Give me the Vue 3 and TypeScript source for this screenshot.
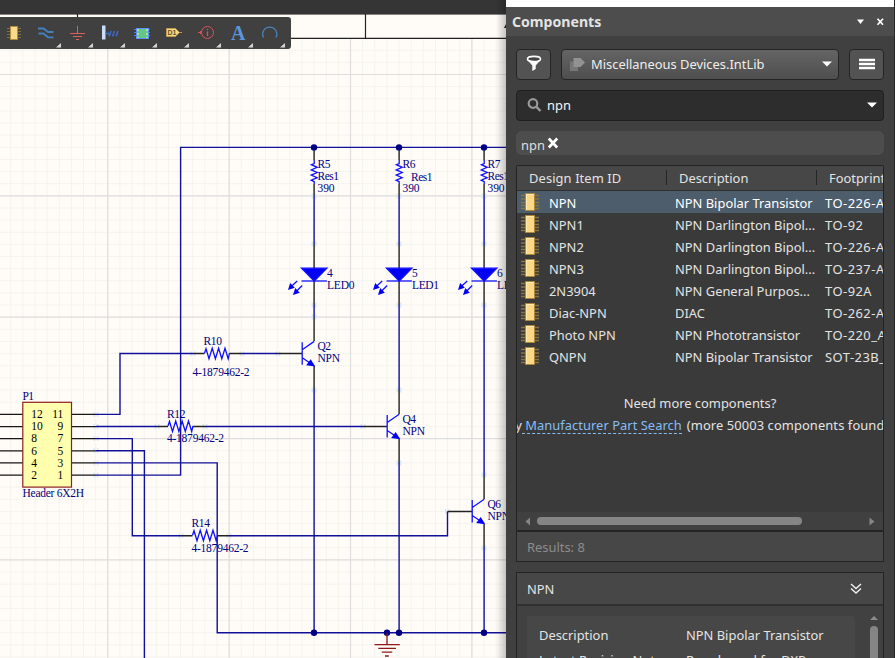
<script setup lang="ts">
interface Part { id: string; desc: string; foot: string }
interface Label { x: number; y: number; t: string; w: number }

const parts: Part[] = [
  { id: 'NPN', desc: 'NPN Bipolar Transistor', foot: 'TO-226-AA' },
  { id: 'NPN1', desc: 'NPN Darlington Bipol...', foot: 'TO-92' },
  { id: 'NPN2', desc: 'NPN Darlington Bipol...', foot: 'TO-226-AA' },
  { id: 'NPN3', desc: 'NPN Darlington Bipol...', foot: 'TO-237-AA' },
  { id: '2N3904', desc: 'NPN General Purpos...', foot: 'TO-92A' },
  { id: 'Diac-NPN', desc: 'DIAC', foot: 'TO-262-AA' },
  { id: 'Photo NPN', desc: 'NPN Phototransistor', foot: 'TO-220_A' },
  { id: 'QNPN', desc: 'NPN Bipolar Transistor', foot: 'SOT-23B_N' },
]

const labels: Label[] = [
  { x: 317.5, y: 168, t: 'R5', w: 13 }, { x: 317.5, y: 180, t: 'Res1', w: 21.5 }, { x: 317.5, y: 192, t: '390', w: 17 },
  { x: 402.5, y: 168, t: 'R6', w: 13 }, { x: 411, y: 181, t: 'Res1', w: 21.5 }, { x: 402.5, y: 192, t: '390', w: 17 },
  { x: 487.5, y: 168, t: 'R7', w: 13 }, { x: 487.5, y: 180, t: 'Res1', w: 21.5 }, { x: 487.5, y: 192, t: '390', w: 17 },
  { x: 327, y: 277, t: '4', w: 5.5 }, { x: 327, y: 289, t: 'LED0', w: 27.5 },
  { x: 412, y: 277, t: '5', w: 5.5 }, { x: 412, y: 289, t: 'LED1', w: 27 },
  { x: 497, y: 277, t: '6', w: 5.5 }, { x: 497, y: 289, t: 'LED2', w: 27.5 },
  { x: 317.5, y: 350, t: 'Q2', w: 13.5 }, { x: 317.5, y: 362, t: 'NPN', w: 22.5 },
  { x: 402.5, y: 423, t: 'Q4', w: 13.5 }, { x: 402.5, y: 435, t: 'NPN', w: 22.5 },
  { x: 487.5, y: 508, t: 'Q6', w: 13.5 }, { x: 487.5, y: 520, t: 'NPN', w: 22.5 },
  { x: 203.5, y: 345, t: 'R10', w: 18.5 }, { x: 192.5, y: 376, t: '4-1879462-2', w: 57 },
  { x: 167, y: 418, t: 'R12', w: 18.5 }, { x: 167, y: 442, t: '4-1879462-2', w: 57 },
  { x: 191.5, y: 527, t: 'R14', w: 18.5 }, { x: 191.5, y: 552, t: '4-1879462-2', w: 57 },
  { x: 22.5, y: 400, t: 'P1', w: 11.5 }, { x: 22.5, y: 497, t: 'Header 6X2H', w: 61.5 },
]

const pinRows = [0, 1, 2, 3, 4, 5].map(i => ({ y: 414.4 + i * 12.14, l: 12 - i * 2, r: 11 - i * 2 }))
const columns = [314.2, 399.2, 484.2]
const transistors = [{ x: 314.2, y: 353.7 }, { x: 399.2, y: 426.5 }, { x: 484.2, y: 511.5 }]
const resistors = [{ x: 204.5, y: 353.2 }, { x: 168, y: 426 }, { x: 192.5, y: 535.2 }]
const wires = [
  'M96 414.4H120V353.5H193', 'M242 353.5H278', 'M96 426.5H157', 'M205 426.5H363',
  'M96 438.6H132.3V535.7H181', 'M229 535.7H447.5V511.5', 'M96 450.8H144.4V658',
  'M96 462.9H217.2V632.7H506', 'M96 475.1H180.6V147.4H506',
  'M314.1 196V244M314.1 305V317M314.1 390V632.7', 'M399.1 196V244M399.1 305V390M399.1 463V632.7',
  'M484.1 196V244M484.1 305V475M484.1 548V632.7',
]
const pins = [
  'M193 353.5H204.5M229.5 353.5H242M278 353.5H302', 'M157 426.5H168M193 426.5H205M363 426.5H387',
  'M181 535.7H192.5M217.5 535.7H229M447.5 511.5H472',
  'M314.1 147.4V160M314.1 184V196M314.1 244V305M314.1 317V341M314.1 366V390',
  'M399.1 147.4V160M399.1 184V196M399.1 244V305M399.1 390V414M399.1 439V463',
  'M484.1 147.4V160M484.1 184V196M484.1 244V305M484.1 475V499M484.1 524V548',
]
const nodes = [[314, 147.4], [399, 147.4], [484, 147.4], [314, 632.7], [387, 632.7], [399, 632.7], [484, 632.7]]
const marks = [
  [193, 353.7], [242, 353.7], [278, 353.7], [96, 414.4], [96, 426.5], [96, 438.6], [96, 450.8], [96, 462.9], [96, 475.1],
  [157, 426.5], [205, 426.5], [363, 426.5], [181, 535.7], [229, 535.7], [447.5, 511.5],
  [314, 196], [314, 244], [314, 305], [314, 317], [314, 390], [399, 196], [399, 244], [399, 305], [399, 390], [399, 463],
  [484, 196], [484, 244], [484, 305], [484, 475], [484, 548],
]
const minorX = Array.from({ length: 42 }, (_, i) => 10.7 + i * 12.135)
const minorY = Array.from({ length: 52 }, (_, i) => 38.1 + i * 12.135)
const majorX = [107.8, 229.2, 350.5, 471.9]
const majorY = [74.5, 195.9, 317.2, 438.6, 559.9]
const tools = ['part', 'wire', 'gnd', 'bus', 'sheet', 'port', 'info', 'text', 'arc']
</script>

<template>
  <div class="screen">
    <main class="editor">
      <div class="strip"></div>
      <svg class="sheet" width="506" height="644" viewBox="0 14 506 644">
        <rect x="0" y="14" width="506" height="644" fill="#fffcf7" />
        <g fill="none" stroke="#f4f3ee" stroke-width="1">
          <path v-for="x in minorX" :key="'x' + x" :d="`M${x} 39V658`" />
          <path v-for="y in minorY" :key="'y' + y" :d="`M0 ${y}H506`" />
        </g>
        <g fill="none" stroke="#dedede" stroke-width="1.2">
          <path v-for="x in majorX" :key="'X' + x" :d="`M${x} 39V658`" />
          <path v-for="y in majorY" :key="'Y' + y" :d="`M0 ${y}H506`" />
        </g>
        <path d="M0 14.5H506" stroke="#858482" />
        <path d="M0 38.4H506M77.5 14V38M365.5 14V38" fill="none" stroke="#222" stroke-width="1.2" />
        <path d="M504 28l2-4v4z" fill="#222" />
        <g fill="#dce7f6">
          <path v-for="(m, i) in marks" :key="i" :d="`M${m[0] - 2.5} ${m[1] - 2.5}h1.5v1.5h2v-1.5h1.5v5h-1.5v-1.5h-2v1.5h-1.5z`" />
        </g>
        <g fill="none" stroke="#222" stroke-width="1.4"><path v-for="p in pins" :key="p" :d="p" /></g>
        <g fill="none" stroke="#10109a" stroke-width="1.4"><path v-for="w in wires" :key="w" :d="w" /></g>
        <circle v-for="(n, i) in nodes" :key="'n' + i" :cx="n[0]" :cy="n[1]" r="3.2" fill="#000084" />

        <g fill="none" stroke="#1010ff" stroke-width="1.3">
          <path v-for="r in resistors" :key="r.x" :d="`M${r.x} ${r.y}l1.5-4.5 3 10 3.2-10.5 3.2 10.5 3.2-10.5 3.2 10.5 3.2-10.5 3.2 10.5 1.3-5.5`" />
          <g v-for="x in columns" :key="'c' + x">
            <path :d="`M${x} 160V163.5l-2.8 1.2 5.8 2.6-6 2.6 6 2.6-6 2.6 6 2.6-6 2.5 3 1.5V184`" />
            <path :d="`M${x - 12.7} 281H${x + 12.7}`" />
            <path :d="`M${x - 12.7} 268.2H${x + 12.7}L${x} 281z`" fill="#0000f5" />
            <path :d="`M${x - 17} 281L${x - 24} 287.5M${x - 12} 285.5L${x - 19} 292.5`" />
            <path :d="`M${x - 26.2} 290l2.2-7 4.6 4.8zM${x - 21.2} 295l2.2-7 4.6 4.8z`" fill="#0000f5" stroke="none" />
          </g>
          <g v-for="t in transistors" :key="'t' + t.y">
            <path :d="`M${t.x - 12} ${t.y - 11.5}V${t.y + 11}M${t.x - 12} ${t.y - 4}L${t.x} ${t.y - 12.3}M${t.x - 12} ${t.y + 4}L${t.x} ${t.y + 12}`" />
            <path :d="`M${t.x + 1} ${t.y + 12.8}l-9-1.3 4.5-6z`" fill="#0000f5" stroke="none" />
          </g>
        </g>

        <path d="M387 633V645M374.5 644.6H399.8M378.3 648.4H396M381.8 652.2H392.3M385 656H388.8" stroke="#901818" stroke-width="1.3" fill="none" />

        <rect x="22.8" y="402.3" width="48.7" height="84.8" fill="#ffffae" stroke="#8f2020" stroke-width="1.2" />
        <g v-for="p in pinRows" :key="p.l">
          <path :d="`M0 ${p.y}H22.5M72 ${p.y}H96`" stroke="#181818" stroke-width="1.25" />
          <text :x="31.3" :y="p.y + 3.7" class="pin">{{ p.l }}</text>
          <text :x="63.3" :y="p.y + 3.7" class="pin right">{{ p.r }}</text>
        </g>
        <text v-for="(l, i) in labels" :key="'l' + i" :x="l.x" :y="l.y" :textLength="l.w" class="label">{{ l.t }}</text>
      </svg>

      <nav class="toolbar">
        <div v-for="t in tools" :key="t" class="tool">
          <svg width="32" height="32" viewBox="0 0 32 32">
            <g v-if="t === 'part'">
              <path d="M7 11.5h3m8 0h3M7 14.5h3m8 0h3M7 17.5h3m8 0h3M7 20.5h3m8 0h3" stroke="#846f37" />
              <rect x="10.5" y="9.5" width="7" height="13" fill="#fad98a" stroke="#b08d3e" />
            </g>
            <g v-else-if="t === 'wire'" fill="none" stroke="#4380bd" stroke-width="1.8">
              <path d="M6 11.5h5.5l4.500 3.500h5.500M6.500 16.500h5l4.500 3.800h5.500" />
            </g>
            <path v-else-if="t === 'gnd'" d="M13.5 9v7M6 16.5h15M9 19.5h9M12 22.5h3" stroke="#dc6058" fill="none" />
            <g v-else-if="t === 'bus'">
              <path d="M6 8.5h3.5v14H6z" fill="#c9ddfb" />
              <path d="M9.5 16.5h3.500M12.500 18.500h1l1.500-4.500M16 18.500h1l1.500-4.500M19.500 18.500h1l1.500-4.500" fill="none" stroke="#3c6fd1" stroke-width="1.4" />
            </g>
            <g v-else-if="t === 'sheet'">
              <path d="M6 12.5h16M6 15.5h16M6 18.5h16" stroke="#4b82dc" />
              <rect x="8.5" y="11.5" width="12" height="10" fill="#61c78c" stroke="#5a93ff" />
              <path d="M10 12v9M19 12v9" stroke="#d8e882" stroke-width="1.5" stroke-dasharray="2 2" />
            </g>
            <g v-else-if="t === 'port'">
              <path d="M6.5 11.5H15.5L19.5 15.5 15.5 19.5H6.5zM19.5 15.5H22" fill="#f5d788" stroke="#bd9c4e" />
              <text x="7.5" y="18.2" class="d1">D1</text>
            </g>
            <g v-else-if="t === 'info'" fill="none" stroke="#d4555c">
              <circle cx="15.5" cy="15.5" r="6" /><path d="M6 15.5h3.5M8.5 14v3" /><path d="M15.5 12v1.3M15.5 14.5v4.5" stroke-width="1.3" />
            </g>
            <text v-else-if="t === 'text'" x="7" y="23" class="glyph">A</text>
            <path v-else d="M7.500 20.500A7.100 7.100 0 1 1 20 20.500" fill="none" stroke="#4b83bb" stroke-width="1.2" />
            <path v-if="t !== 'part'" d="M29 26v4.5h-5z" fill="#d5d5d5" />
          </svg>
        </div>
      </nav>
    </main>

    <aside class="panel">
      <div class="white"></div>
      <header class="title">
        <b>Components</b>
        <svg width="34" height="12" viewBox="0 0 34 12"><path d="M2 3.5h7L5.5 8z" fill="#fff" /><path d="M22.5 2.8l5.5 6M28 2.8l-5.5 6" stroke="#fff" stroke-width="1.7" /></svg>
      </header>
      <div class="content">
        <div class="controls">
          <button class="btn menu">
            <svg width="16" height="17" viewBox="0 0 16 17"><ellipse cx="8" cy="4" rx="6.5" ry="2.6" fill="#444" stroke="#fff" stroke-width="1.6" /><path d="M1 4.5L6.3 10.5V16L9.7 14V10.5L15 4.5Q8 8.5 1 4.5z" fill="#fff" /></svg>
          </button>
          <button class="btn combo">
            <svg width="17" height="15" viewBox="0 0 17 15"><path d="M1 4.5h8V14H1z" fill="#777" /><path d="M4.5 1h7L16 5.5 11.5 10h-7z" fill="#929292" /></svg>
            <span class="lib">Miscellaneous Devices.IntLib</span>
            <svg class="drop" width="10" height="6" viewBox="0 0 10 6"><path d="M0 .5h10L5 5.5z" fill="#fff" /></svg>
          </button>
          <button class="btn menu">
            <svg width="16" height="12" viewBox="0 0 16 12"><path d="M0 2h16M0 6h16M0 10h16" stroke="#fff" stroke-width="2.6" /></svg>
          </button>
        </div>
        <div class="search">
          <svg width="16" height="16" viewBox="0 0 16 16"><circle cx="6" cy="6.5" r="4.3" fill="none" stroke="#999" stroke-width="2.2" /><path d="M9.2 9.7l4.3 4.3" stroke="#999" stroke-width="2.4" /></svg>
          <span>npn</span>
          <svg class="drop" width="10" height="6" viewBox="0 0 10 6"><path d="M0 .5h10L5 5.5z" fill="#fff" /></svg>
        </div>
        <div class="tags"><span>npn</span><svg width="12" height="12" viewBox="0 0 12 12"><path d="M1.8 1.5l8.4 9M10.2 1.5l-8.4 9" stroke="#fff" stroke-width="2.6" /></svg></div>

        <section class="list">
          <div class="row head"><span class="c1">Design Item ID</span><span class="c2">Description</span><span class="c3">Footprint</span></div>
          <div v-for="(p, i) in parts" :key="p.id" class="row" :class="{ sel: i === 0 }">
            <svg class="chip" width="18" height="18" viewBox="0 0 18 18"><path d="M0 2.5h4M0 6h4M0 9.5h4M0 12.5h4M0 15.5h4M14 2.5h4M14 6h4M14 9.5h4M14 12.5h4M14 15.5h4" stroke="#8a7540" stroke-width="1.3" /><path d="M4.5.5h9v17h-9z" fill="#fbd887" stroke="#aa873c" /><path d="M5.5 17V1.5H13" fill="none" stroke="#ffeab4" /></svg>
            <span class="r1">{{ p.id }}</span><span class="r2">{{ p.desc }}</span><span class="r3">{{ p.foot }}</span>
          </div>
          <div class="more">
            <p class="need">Need more components?</p>
            <p class="try"><span>Try</span><a>&nbsp;Manufacturer Part Search</a><span class="found">(more 50003 components found)</span></p>
          </div>
          <div class="hscroll">
            <svg width="6" height="9" viewBox="0 0 6 9"><path d="M5 .5v8L.5 4.5z" fill="#858585" /></svg>
            <i></i>
            <svg class="drop" width="6" height="9" viewBox="0 0 6 9"><path d="M.5.5v8L5.5 4.5z" fill="#858585" /></svg>
          </div>
        </section>
        <div class="results">Results: 8</div>

        <section class="detail">
          <div class="dhead"><span>NPN</span><svg width="12" height="12" viewBox="0 0 12 12"><path d="M1 1l5 4.5L11 1M1 5.5L6 10l5-4.5" fill="none" stroke="#eee" stroke-width="1.5" /></svg></div>
          <div class="dbody">
            <dl>
              <dt>Description</dt><dd>NPN Bipolar Transistor</dd>
              <dt>Latest Revision Note</dt><dd>Re-released for DXP</dd>
            </dl>
            <div class="vscroll"><svg width="8" height="4" viewBox="0 0 8 4"><path d="M0 4L4 0l4 4z" fill="#8b8b8b" /></svg><i></i></div>
          </div>
        </section>
      </div>
    </aside>
  </div>
</template>

<style>
body { margin: 0; overflow: hidden; }
</style>
<style scoped>
* { box-sizing: border-box; }
.screen { display: flex; width: 895px; height: 658px; overflow: hidden; background: #404040; font: 12.9px/22px "Noto Sans", "Open Sans", sans-serif; color: #e3e3e3; }
.editor { position: relative; width: 506px; height: 658px; flex: none; }
.editor::after { content: ""; position: absolute; right: 0; top: 0; width: 10px; height: 658px; background: linear-gradient(90deg, transparent, rgba(0, 0, 0, .22)); }
.strip { height: 14px; background: #353535; }
.sheet { display: block; }
.label { font: 11.5px "Liberation Serif", serif; fill: #000080; }
.pin { font: 11.5px "Liberation Serif", serif; fill: #000; }
.right { text-anchor: end; }
.toolbar { position: absolute; left: 0; top: 17px; width: 291px; height: 32px; display: flex; background: #404040; border-radius: 0 3px 3px 0; }
.tool { width: 32px; height: 32px; flex: none; }
.tool svg { display: block; }
.d1 { font: bold 7px "Liberation Sans", sans-serif; fill: #66531f; }
.glyph { font: bold 20px "Liberation Serif", serif; fill: #5a96de; }
.panel { width: 389px; height: 658px; flex: none; background: #404040; border-right: 1px solid #272727; display: flex; flex-direction: column; }
.white { height: 7px; background: #fff; flex: none; }
.title { height: 29px; flex: none; background: #4d4d4d; display: flex; align-items: center; justify-content: space-between; padding: 0 5px 0 6px; font-size: 14.1px; }
.content { padding: 13px 10px 0; flex: 1; min-height: 0; }
.controls { display: flex; gap: 10px; height: 31px; }
.btn { width: 35px; height: 31px; padding: 0; border: 1px solid #242424; border-radius: 4px; background: #535353; color: #eee; font: inherit; display: flex; align-items: center; justify-content: center; }
.combo { width: 278px; justify-content: flex-start; padding: 0 6px 1px 7px; background: linear-gradient(#646464, #4f4f4f); }
.menu { padding-bottom: 2px; }
.lib { margin-left: 5px; }
.drop { margin-left: auto; }
.search { height: 31px; margin-top: 10px; background: #2d2d2d; border: 1px solid #202020; border-radius: 4px; display: flex; align-items: center; padding: 0 6px 1px 10px; gap: 4px; color: #f4f4f4; }
.tags { height: 24px; margin-top: 10px; background: #4d4d4d; border-radius: 6px; display: flex; padding: 3px 5px; gap: 2px; color: #ddd; }
.tags svg { margin-top: 3px; }
.list { width: 368px; height: 366px; margin-top: 10px; border: 1px solid #232323; border-radius: 2px 2px 0 0; background: #3a3a3a; overflow: hidden; display: flex; flex-direction: column; }
.row { height: 22px; flex: none; display: flex; white-space: nowrap; padding-left: 4px; line-height: 24px; }
.head { height: 25px; background: #474747; border-bottom: 1px solid #303030; padding: 4px 0 5px 12px; line-height: 16px; }
.c1 { width: 138px; flex: none; border-right: 1px solid #262626; letter-spacing: .1px; }
.c2 { width: 150px; flex: none; padding-left: 12px; border-right: 1px solid #262626; }
.c3 { padding-left: 12px; }
.sel { background: #4e5d6c; color: #fff; }
.chip { margin-top: 2px; flex: none; }
.r1 { width: 126px; padding-left: 10px; flex: none; }
.r2 { width: 150px; padding-left: 10px; flex: none; }
.r3 { padding-left: 10px; letter-spacing: .5px; }
.more { height: 145px; flex: none; white-space: nowrap; text-align: center; padding-top: 25px; }
.more p { margin: 0; }
.try { display: flex; width: 440px; margin-left: -13.5px !important; }
.try a { color: #86bdf3; border-bottom: 1px dashed #86bdf3; height: 20px; line-height: 23px; letter-spacing: .04px; }
.found { margin-left: 5px; letter-spacing: .1px; }
.hscroll { flex: 1; background: #404040; display: flex; align-items: center; padding: 0 8px; }
.hscroll i { width: 265px; height: 8px; margin-left: 6px; border-radius: 4px; background: #858585; }
.results { height: 31px; border: 1px solid #242424; background: #474747; color: #8c8c8c; padding: 4px 10px; }
.detail { margin-top: 10px; border: 1px solid #232323; border-bottom: 0; height: 86px; overflow: hidden; background: #414141; }
.dhead { height: 33px; background: #474747; border-bottom: 2px solid #303030; padding: 0 21px 0 10px; display: flex; align-items: center; justify-content: space-between; }
.dbody { display: flex; padding: 10px 5px 0 10px; }
dl { margin: 0; width: 328px; height: 60px; border-radius: 3px; background: #474747; padding: 8px 12px; display: grid; grid-template-columns: 147px 1fr; grid-auto-rows: 25px; white-space: nowrap; }
dd { margin: 0; }
.vscroll { margin-left: 15px; width: 8px; display: flex; flex-direction: column; gap: 6px; }
.vscroll svg { display: block; }
.vscroll i { height: 60px; border-radius: 4px; background: #858585; }
</style>
